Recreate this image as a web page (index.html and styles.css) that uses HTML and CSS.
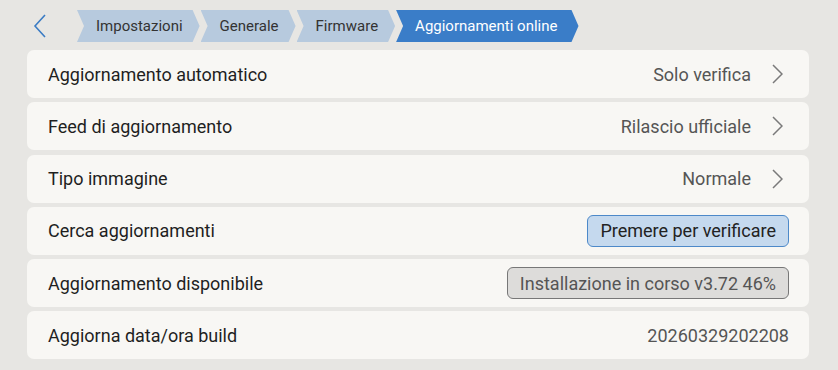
FILE: index.html
```html
<!DOCTYPE html>
<html lang="it">
  <head>
    <meta charset="utf-8">
    <title>Aggiornamenti online</title>
    <link rel="stylesheet" href="styles.css">
  </head>
  <body>
    <div id="top-bar">
      <div class="back-btn">
        <svg width="14" height="24" viewBox="0 0 14 24"><polyline points="12,1 2,12 12,23" fill="none" stroke="#3b7cc4" stroke-width="1.6"/></svg>
      </div>
      <div class="crumbs">
        <div class="crumb first">Impostazioni</div>
        <div class="crumb">Generale</div>
        <div class="crumb">Firmware</div>
        <div class="crumb active">Aggiornamenti online</div>
      </div>
    </div>

    <div id="settings-list">
      <div class="row">
        <span class="label">Aggiornamento automatico</span>
        <span class="value">Solo verifica</span>
        <svg class="chev" width="12" height="20" viewBox="0 0 12 20"><polyline points="2,1 11,10 2,19" fill="none" stroke="#7a7a7a" stroke-width="1.5"/></svg>
      </div>
      <div class="row">
        <span class="label">Feed di aggiornamento</span>
        <span class="value">Rilascio ufficiale</span>
        <svg class="chev" width="12" height="20" viewBox="0 0 12 20"><polyline points="2,1 11,10 2,19" fill="none" stroke="#7a7a7a" stroke-width="1.5"/></svg>
      </div>
      <div class="row">
        <span class="label">Tipo immagine</span>
        <span class="value">Normale</span>
        <svg class="chev" width="12" height="20" viewBox="0 0 12 20"><polyline points="2,1 11,10 2,19" fill="none" stroke="#7a7a7a" stroke-width="1.5"/></svg>
      </div>
      <div class="row plain">
        <span class="label">Cerca aggiornamenti</span>
        <button class="check-btn">Premere per verificare</button>
      </div>
      <div class="row plain">
        <span class="label">Aggiornamento disponibile</span>
        <button class="busy-btn">Installazione in corso v3.72 46%</button>
      </div>
      <div class="row plain">
        <span class="label">Aggiorna data/ora build</span>
        <span class="value">20260329202208</span>
      </div>
    </div>
  </body>
</html>
```

FILE: styles.css
```css
body {
  background-color: #e7e6e3;
  font-family: Roboto, "Liberation Sans", sans-serif;
  margin: 0;
  padding: 0;
}
#top-bar {
  display: flex;
  align-items: center;
  height: 32px;
  padding: 10px 0 8px 33px;
}
.back-btn {
  width: 14px;
  height: 24px;
  margin-right: 30px;
}
.back-btn svg {
  display: block;
}
.crumbs {
  display: flex;
  gap: 1px;
  height: 32px;
}
.crumb {
  display: flex;
  align-items: center;
  height: 32px;
  padding: 0 17px 0 19px;
  background-color: #b7cade;
  color: #333;
  font-size: 15px;
  clip-path: polygon(0 0, calc(100% - 7px) 0, 100% 50%, calc(100% - 7px) 100%, 0 100%, 7px 50%);
}
.crumb.active {
  background-color: #3a7dc8;
  color: #fff;
  padding-right: 21px;
}
#settings-list {
  display: flex;
  flex-direction: column;
  gap: 4.3px;
  margin: 0 29px 0 27px;
}
.row {
  display: flex;
  align-items: center;
  height: 48px;
  padding: 0 26px 0 21px;
  background-color: #f8f7f4;
  border-radius: 7px;
}
.row.plain {
  padding-right: 20px;
}
.label {
  flex: 1;
  font-size: 18px;
  color: #1f1f1f;
}
.value {
  font-size: 18px;
  color: #555;
}
.chev {
  margin-left: 20px;
}
.check-btn,
.busy-btn {
  font-family: Roboto, "Liberation Sans", sans-serif;
  font-size: 18px;
  height: 32px;
  padding: 0 12px;
  border-radius: 6px;
}
.check-btn {
  background-color: #c5d9ee;
  border: 1.5px solid #4d89c9;
  color: #222;
}
.busy-btn {
  background-color: #dddcda;
  border: 1.5px solid #777;
  color: #555;
}
```
